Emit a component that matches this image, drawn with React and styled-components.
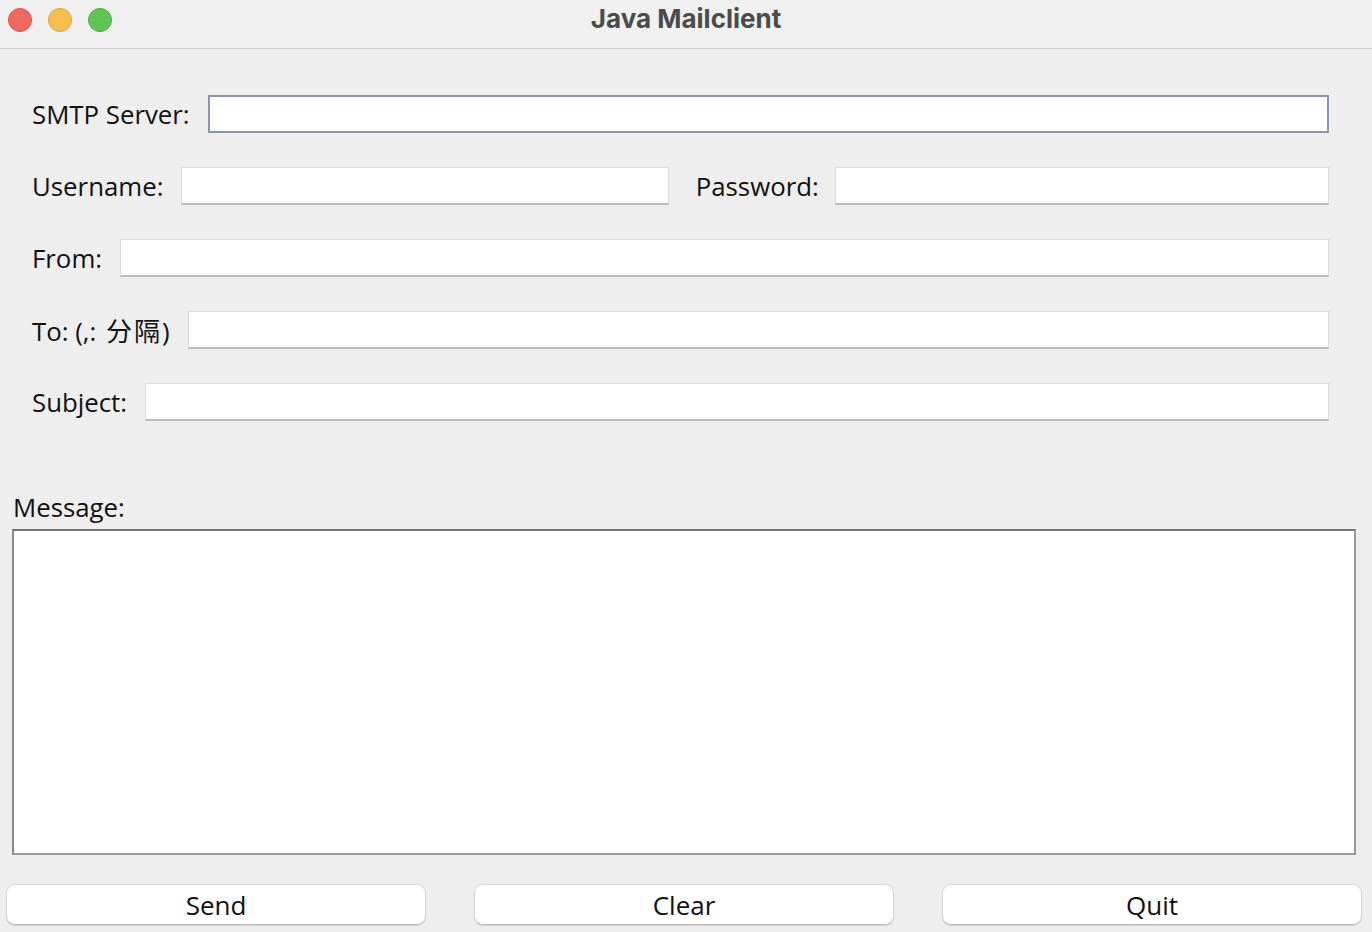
import React from "react";
import styled, { createGlobalStyle } from "styled-components";

const GlobalStyle = createGlobalStyle`
  html, body {
    margin: 0;
    padding: 0;
    background: #eeeeee;
  }
  #root {
    width: 1372px;
    height: 932px;
    overflow: hidden;
  }
`;

const Window = styled.div`
  width: 1372px;
  height: 932px;
  display: flex;
  flex-direction: column;
  background: #eeeeee;
  font-family: "Open Sans", "Noto Sans CJK SC", sans-serif;
  color: #111;
`;

const TitleBar = styled.div`
  height: 49px;
  flex-shrink: 0;
  display: flex;
  align-items: flex-start;
  padding: 8px 0 0 8px;
  box-sizing: border-box;
  background: #eff0ef;
  border-bottom: 1px solid #cfcfcf;
  position: relative;
`;

const Lights = styled.div`
  display: flex;
  gap: 16px;
`;

const Light = styled.span`
  width: 24px;
  height: 24px;
  border-radius: 50%;
  box-sizing: border-box;
  background: ${(p) => p.color};
  border: 1px solid ${(p) => p.edge};
`;

const Title = styled.div`
  position: absolute;
  left: 0;
  right: 0;
  top: 0;
  height: 38px;
  line-height: 38px;
  text-align: center;
  font-family: Inter, "Liberation Sans", sans-serif;
  font-weight: 700;
  font-size: 26px;
  color: #4b4b4b;
  pointer-events: none;
`;

const Form = styled.div`
  display: flex;
  flex-direction: column;
  gap: 34px;
  padding: 46px 43px 0 32px;
`;

const Row = styled.div`
  display: flex;
  align-items: center;
  height: 38px;
`;

const Label = styled.label`
  font-size: 25.8px;
  white-space: nowrap;
  margin-right: ${(p) => p.$gap || 18}px;
  margin-left: ${(p) => p.$offset || 0}px;
`;

const Cjk = styled.span`
  font-family: "Noto Sans CJK SC", sans-serif;
  font-size: 26px;
  margin-left: 3px;
  letter-spacing: 2px;
`;

const Field = styled.input`
  flex: ${(p) => p.$grow || 1} 1 0;
  min-width: 0;
  height: 38px;
  box-sizing: border-box;
  background: #fff;
  border: 1px solid #dcdcdc;
  border-bottom: 2px solid #bdbdbd;
  outline: none;
  ${(p) =>
    p.$focused &&
    `
    border: 2px solid #8a97aa;
  `}
`;

const MessageBlock = styled.div`
  display: flex;
  flex-direction: column;
  padding: 71px 16px 0 12px;
`;

const MessageLabel = styled.div`
  font-size: 25.8px;
  margin-left: 1px;
  line-height: 30px;
  margin-bottom: 7px;
`;

const TextArea = styled.textarea`
  height: 326px;
  box-sizing: border-box;
  resize: none;
  background: #fff;
  border-style: solid;
  border-width: 2px;
  border-color: #777 #999 #999 #8a8a8a;
  outline: none;
`;

const ButtonBar = styled.div`
  display: flex;
  gap: 48px;
  padding: 29px 10px 0 6px;
`;

const Button = styled.button`
  flex: 1;
  height: 41px;
  background: #fff;
  border: 1px solid #d4d4d4;
  border-bottom-color: #bdbdbd;
  border-radius: 9px;
  box-shadow: 0 1px 1px rgba(0, 0, 0, 0.12);
  font-family: "Open Sans", sans-serif;
  font-size: 26px;
  color: #111;
  padding: 0;
`;

export default function App() {
  return (
    <>
      <GlobalStyle />
      <Window>
        <TitleBar>
          <Lights>
            <Light color="#ee6a5f" edge="#d5544a" />
            <Light color="#f5bf4f" edge="#d9a23a" />
            <Light color="#61c554" edge="#4ea93f" />
          </Lights>
          <Title>Java Mailclient</Title>
        </TitleBar>

        <Form>
          <Row>
            <Label>SMTP Server:</Label>
            <Field $focused />
          </Row>
          <Row>
            <Label>Username:</Label>
            <Field $grow={485} />
            <Label $offset={27} $gap={16}>Password:</Label>
            <Field $grow={492} />
          </Row>
          <Row>
            <Label>From:</Label>
            <Field />
          </Row>
          <Row>
            <Label>
              To: (,: <Cjk>分隔</Cjk>)
            </Label>
            <Field />
          </Row>
          <Row>
            <Label>Subject:</Label>
            <Field />
          </Row>
        </Form>

        <MessageBlock>
          <MessageLabel>Message:</MessageLabel>
          <TextArea />
        </MessageBlock>

        <ButtonBar>
          <Button>Send</Button>
          <Button>Clear</Button>
          <Button>Quit</Button>
        </ButtonBar>
      </Window>
    </>
  );
}
